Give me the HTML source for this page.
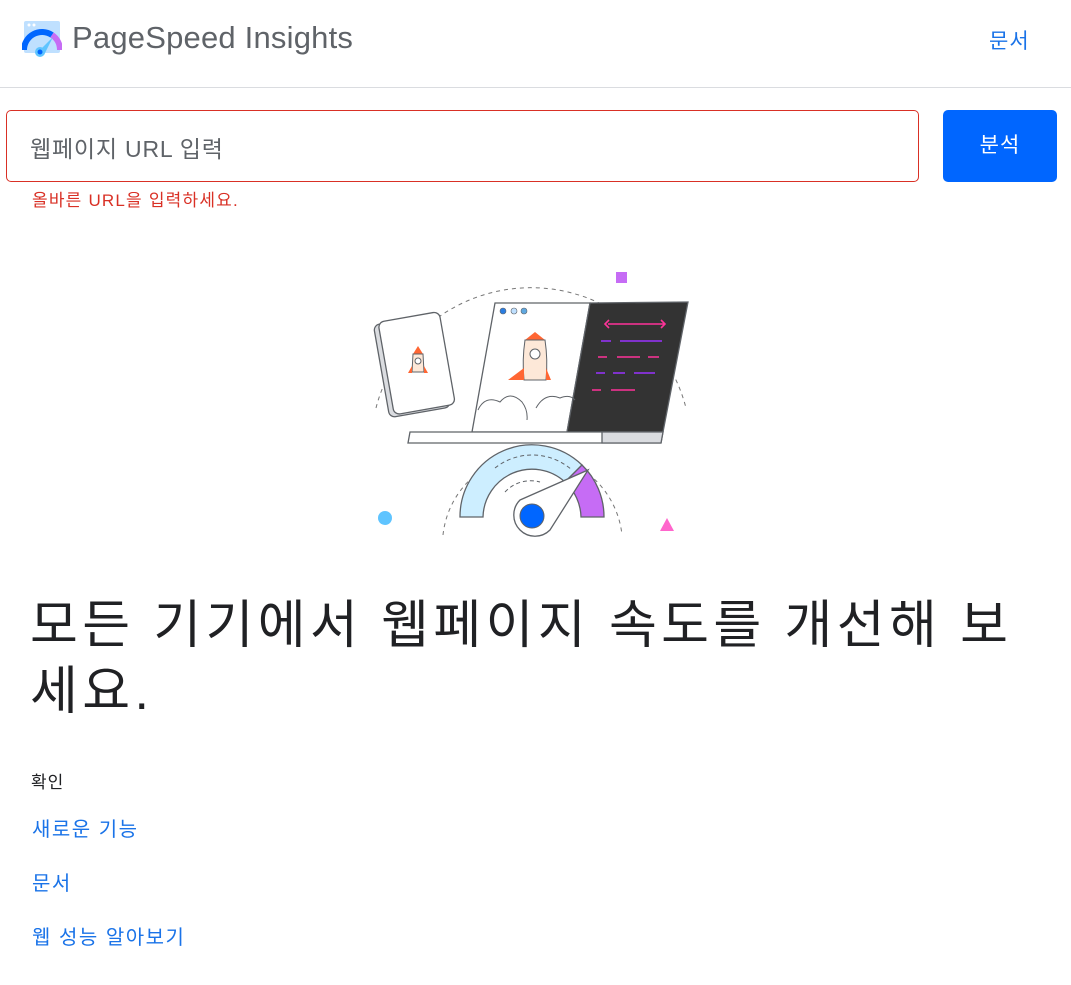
<!DOCTYPE html>
<html><head><meta charset="utf-8"><style>
*{margin:0;padding:0;box-sizing:border-box}
body{width:1071px;height:985px;background:#fff;font-family:"Liberation Sans","Noto Sans CJK KR",sans-serif;position:relative;overflow:hidden}
.hdr{position:absolute;left:0;top:0;width:1071px;height:88px;border-bottom:1px solid #dadce0}
.title{position:absolute;left:72px;top:20px;font-size:31px;color:#5f6368;letter-spacing:0.2px}
.doc{position:absolute;left:989px;top:25px;font-size:21px;color:#1a73e8;letter-spacing:1px}
.inp{position:absolute;left:6px;top:110px;width:913px;height:72px;border:1px solid #d93025;border-radius:5px}
.inp span{position:absolute;left:23px;top:19px;font-size:23px;color:#5f6368;letter-spacing:0.8px}
.btn{position:absolute;left:943px;top:110px;width:114px;height:72px;background:#0066ff;border-radius:5px;color:#fff;font-size:21px;text-align:center;line-height:72px;letter-spacing:1px}
.err{position:absolute;left:32px;top:186px;font-size:17px;color:#d93025;letter-spacing:1.2px}
h1{position:absolute;left:30px;top:593px;white-space:nowrap;font-weight:normal;font-size:52px;line-height:66px;color:#202124;letter-spacing:4.4px}
.lbl{position:absolute;left:31px;top:768px;font-size:17px;color:#202124;letter-spacing:1px}
.lk{position:absolute;left:32px;font-size:20px;color:#1a73e8;letter-spacing:1.5px}
</style></head><body>
<div class="hdr">
<svg style="position:absolute;left:22px;top:19px" width="40" height="38" viewBox="0 0 40 38">
<rect x="2" y="2" width="36" height="32" rx="2" fill="#bfe0ff"/>
<circle cx="7" cy="6" r="1.5" fill="#fff"/><circle cx="12" cy="6" r="1.5" fill="#fff"/>
<path d="M2 31 A18 18 0 0 1 30 16" stroke="#0066ff" stroke-width="6" fill="none"/>
<path d="M30 16 A18 18 0 0 1 38 31" stroke="#c66cf5" stroke-width="6" fill="none"/>
<path d="M16 33 L31 18 L22 36 Z" fill="#5fc4ff"/><circle cx="18" cy="33" r="5" fill="#5fc4ff"/><circle cx="18" cy="33" r="2.5" fill="#0066ff"/>
</svg>
<div class="title">PageSpeed Insights</div>
<div class="doc">문서</div>
</div>
<div class="inp"><span>웹페이지 URL 입력</span></div>
<div class="btn">분석</div>
<div class="err">올바른 URL을 입력하세요.</div>

<svg style="position:absolute;left:0;top:0" width="1071" height="600" viewBox="0 0 1071 600">
<g fill="none" stroke="#777" stroke-width="1" stroke-dasharray="4 4">
<path d="M376 408 A160 160 0 0 1 686 408"/>
<path d="M443 535 A90 90 0 0 1 622 535"/>
</g>
<rect x="616" y="272" width="11" height="11" fill="#c66cf5"/>
<circle cx="385" cy="518" r="7" fill="#5fc4ff"/>
<path d="M660 531 L667 518 L674 531 Z" fill="#ff66cc"/>
<g transform="rotate(-10 418 365)" stroke="#5f6368" stroke-width="1.3">
<rect x="381" y="318" width="62" height="94" rx="6" fill="#dadce0"/>
<rect x="386" y="316" width="62" height="94" rx="6" fill="#fff"/>
</g>
<path d="M418 346 L423 354 L413 354 Z" fill="#ff6633"/>
<path d="M413 354 L423 354 L424 372 L412 372 Z" fill="#fde8d8" stroke="#5f6368"/>
<circle cx="418" cy="361" r="3" fill="#fff" stroke="#5f6368"/>
<path d="M412 366 L408 373 L412 373Z M424 366 L428 373 L424 373Z" fill="#ff6633"/>
<path d="M495 303 L590 303 L567 432 L472 432 Z" fill="#fff" stroke="#5f6368" stroke-width="1.3"/>
<path d="M590 303 L688 302 L663 432 L567 432 Z" fill="#333" stroke="#5f6368" stroke-width="1.3"/>
<circle cx="503" cy="311" r="3" fill="#2a7de1" stroke="#5f6368" stroke-width=".6"/>
<circle cx="514" cy="311" r="3" fill="#bfe0ff" stroke="#5f6368" stroke-width=".6"/>
<circle cx="524" cy="311" r="3" fill="#5fa8e0" stroke="#5f6368" stroke-width=".6"/>
<path d="M478 410 Q485 395 500 402 Q510 390 522 402 Q528 410 527 420 M536 408 Q545 392 560 398 Q570 394 575 400" fill="none" stroke="#5f6368"/>
<path d="M535 332 L545 340 L525 340 Z" fill="#ff6633"/>
<path d="M525 340 L545 340 Q548 360 546 380 L524 380 Q522 360 525 340Z" fill="#fde8d8" stroke="#5f6368"/>
<circle cx="535" cy="354" r="5" fill="#fff" stroke="#5f6368"/>
<path d="M524 368 L508 380 L524 380Z M546 368 L551 380 L546 380Z" fill="#ff6633"/>
<g stroke-width="1.6">
<path d="M608 324 L665 324 M609 320 L605 324 L609 328 M661 320 L665 324 L661 328" stroke="#ff3399" fill="none"/>
<path d="M601 341 L611 341 M620 341 L662 341" stroke="#9933ff"/>
<path d="M598 357 L607 357 M617 357 L640 357 M648 357 L659 357" stroke="#ff3399"/>
<path d="M596 373 L605 373 M613 373 L625 373 M634 373 L655 373" stroke="#9933ff"/>
<path d="M592 390 L601 390 M611 390 L635 390" stroke="#ff3399"/>
</g>
<path d="M410 432 L663 432 L661 443 L408 443 Z" fill="#fff" stroke="#5f6368" stroke-width="1.3"/>
<path d="M602 432 L663 432 L661 443 L602 443 Z" fill="#dadce0" stroke="#5f6368" stroke-width="1.3"/>
<path d="M460 517 A72 72 0 0 1 582 465 L565 482 A49 49 0 0 0 483 517 Z" fill="#cdeeff" stroke="#5f6368" stroke-width="1.3"/>
<path d="M582 465 A72 72 0 0 1 604 517 L581 517 A49 49 0 0 0 565 482 Z" fill="#c66cf5" stroke="#5f6368" stroke-width="1.3"/>
<path d="M495 468 A60 60 0 0 1 572 470 M505 492 A35 35 0 0 1 540 482" fill="none" stroke="#5f6368" stroke-dasharray="4 3"/>
<path d="M520 500 L588 470 L550 530 A20 20 0 1 1 520 500 Z" fill="#fff" stroke="#5f6368" stroke-width="1.3"/>
<circle cx="532" cy="516" r="12" fill="#0066ff" stroke="#5f6368"/>
</svg>

<h1>모든 기기에서 웹페이지 속도를 개선해 보<br>세요.</h1>
<div class="lbl">확인</div>
<div class="lk" style="top:813px">새로운 기능</div>
<div class="lk" style="top:867px">문서</div>
<div class="lk" style="top:921px">웹 성능 알아보기</div>
</body></html>
